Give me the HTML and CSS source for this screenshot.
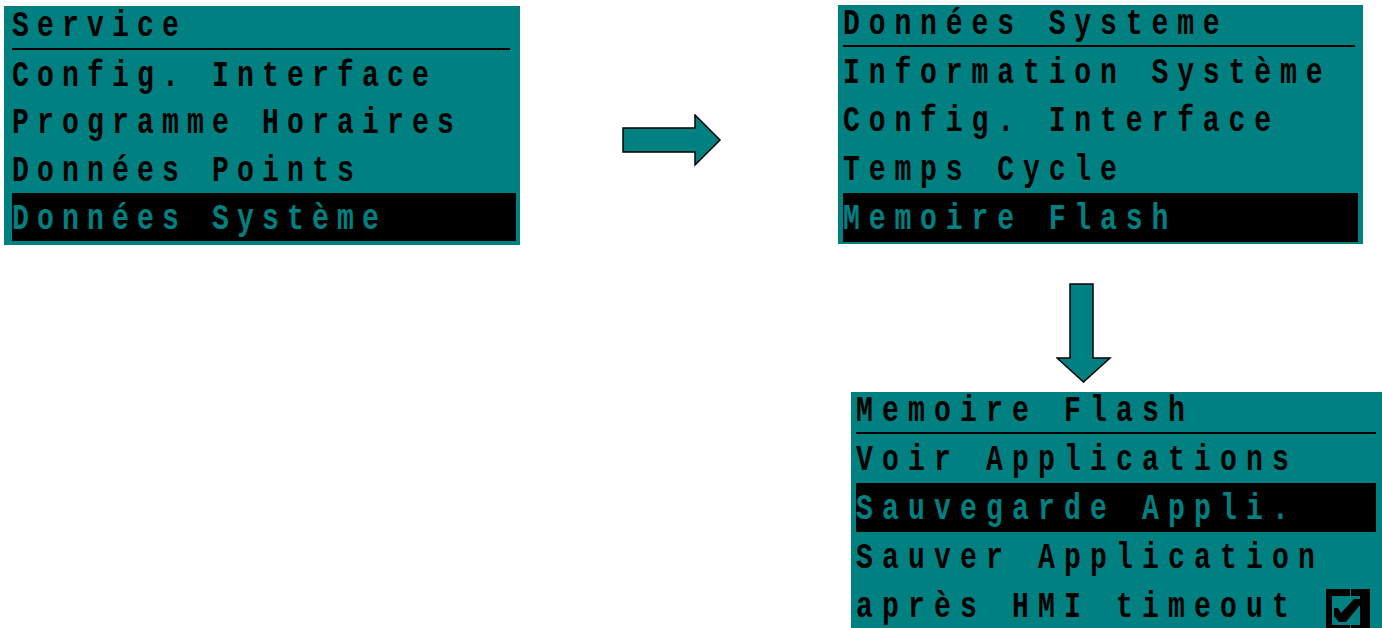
FILE: index.html
```html
<!DOCTYPE html>
<html lang="fr">
<head>
<meta charset="utf-8">
<title>Menu Service</title>
<link rel="stylesheet" href="styles.css">
</head>
<body>
<div class="stage">
  <div class="top">
    <div class="panel p1">
      <div class="head"><span class="t">Service</span></div>
      <div class="row"><span class="t">Config. Interface</span></div>
      <div class="row"><span class="t">Programme Horaires</span></div>
      <div class="row"><span class="t">Données Points</span></div>
      <div class="row sel"><span class="t">Données Système</span></div>
    </div>
    <svg class="arrow-right" width="100" height="53" viewBox="0 0 100 53">
      <polygon points="1,14 73,14 73,1 98,26 73,51 73,38 1,38" fill="#008080" stroke="#000" stroke-width="1.5" stroke-linejoin="miter"/>
    </svg>
    <div class="panel p2">
      <div class="head"><span class="t">Données Systeme</span></div>
      <div class="row"><span class="t">Information Système</span></div>
      <div class="row"><span class="t">Config. Interface</span></div>
      <div class="row"><span class="t">Temps Cycle</span></div>
      <div class="row sel"><span class="t">Memoire Flash</span></div>
    </div>
  </div>
  <svg class="arrow-down" width="56" height="100" viewBox="0 0 56 100">
    <polygon points="14,1 37,1 37,75 54,75 27.5,99 1,75 14,75" fill="#008080" stroke="#000" stroke-width="1.5"/>
  </svg>
  <div class="panel p3">
    <div class="head"><span class="t">Memoire Flash</span></div>
    <div class="row"><span class="t">Voir Applications</span></div>
    <div class="row sel"><span class="t">Sauvegarde Appli.</span></div>
    <div class="row"><span class="t">Sauver Application</span></div>
    <div class="row last"><span class="t grow">après HMI timeout</span>
      <svg class="check" width="44" height="44" viewBox="0 0 44 44">
        <rect x="0" y="0" width="44" height="44" fill="#000"/>
        <rect x="6" y="7" width="28" height="29" fill="#008080"/>
        <rect x="24" y="0" width="1" height="7" fill="#008080"/>
        <rect x="24" y="36" width="1" height="8" fill="#008080"/>
        <polygon points="8,19 12,19 15,24 28,10 34,10 34,16 20,33 13,33 8,27" fill="#000"/>
      </svg>
    </div>
  </div>
</div>
</body>
</html>
```

FILE: styles.css
```css
html, body {
  margin: 0;
  padding: 0;
  background: #ffffff;
  overflow: hidden;
}

.stage {
  width: 1382px;
  height: 628px;
  overflow: hidden;
}

.top {
  display: flex;
  align-items: flex-start;
}

.panel {
  background: #008080;
  box-sizing: border-box;
  display: flex;
  flex-direction: column;
  font-family: "Liberation Mono", "DejaVu Sans Mono", monospace;
  font-weight: bold;
  font-size: 36px;
  color: #000;
  white-space: nowrap;
}

.t {
  display: inline-block;
  transform: scaleX(0.78);
  transform-origin: 0 50%;
  letter-spacing: 10.45px;
}

.head {
  box-sizing: border-box;
  border-bottom: 2px solid #000;
}

.row {
  box-sizing: border-box;
}

.sel {
  background: #000;
  color: #008080;
}

/* Panel 1 */
.p1 {
  width: 516px;
  height: 239px;
  margin: 6px 0 0 4px;
  padding: 0 4px 4px 8px;
}
.p1 .head {
  height: 44px;
  padding-top: 1px;
  line-height: 40px;
  margin-right: 6px;
}
.p1 .row {
  height: 47.75px;
  padding-top: 4.5px;
  line-height: 43.25px;
}

.arrow-right {
  display: block;
  margin: 114px 0 0 102px;
}

/* Panel 2 */
.p2 {
  width: 525px;
  height: 239px;
  margin: 5px 0 0 116px;
  padding: 0 5px 2px 5px;
}
.p2 .t {
  letter-spacing: 11.35px;
}
.p2 .head {
  height: 42px;
  padding-top: 0;
  line-height: 40px;
  margin-right: 3px;
}
.p2 .row {
  height: 48.75px;
  padding-top: 4.5px;
  line-height: 44.25px;
}

.arrow-down {
  display: block;
  margin: 38px 0 0 1056px;
}

/* Panel 3 */
.p3 {
  width: 531px;
  height: 260px;
  margin: 9px 0 0 851px;
  padding: 0 6px 0 5px;
}
.p3 .t {
  letter-spacing: 11.73px;
}
.p3 .head {
  height: 42px;
  padding-top: 1px;
  line-height: 38px;
  margin-right: 0;
}
.p3 .row {
  height: 49px;
  padding-top: 4.5px;
  line-height: 44.5px;
}
.p3 .last {
  display: flex;
  justify-content: space-between;
  align-items: flex-start;
}
.p3 .grow {
  flex: 1 1 0;
  min-width: 0;
}
.check {
  display: block;
  margin-top: 3px;
  margin-right: 6px;
  flex: none;
}
```
